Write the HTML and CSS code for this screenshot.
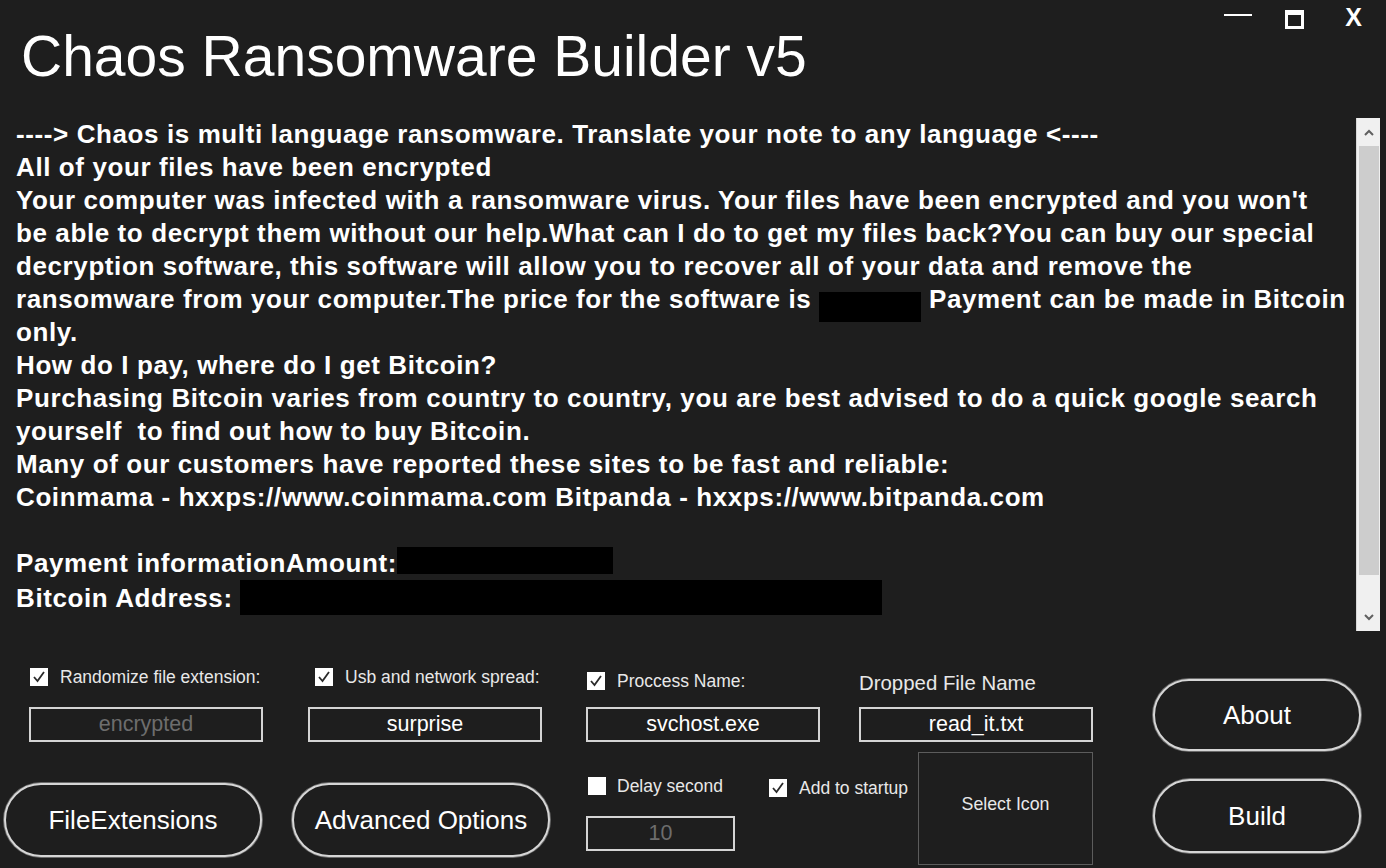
FILE: index.html
```html
<!DOCTYPE html>
<html lang="en">

<head>
    <meta charset="UTF-8">
    <title>Chaos Ransomware Builder v5</title>
    <link rel="stylesheet" href="styles.css">
</head>

<body>
    <div class="app">
        <!-- 标题栏 -->
        <div class="titlebar">
            <h1 class="title">Chaos Ransomware Builder v5</h1>
            <div class="winctl">
                <span class="win-min"></span>
                <span class="win-max"></span>
                <span class="win-close">X</span>
            </div>
        </div>

        <!-- 勒索信文本框 -->
        <div class="notebox">
            <div class="note">
                <div class="line">----&gt; Chaos is multi language ransomware. Translate your note to any language &lt;----</div>
                <div class="line">All of your files have been encrypted</div>
                <div class="line">Your computer was infected with a ransomware virus. Your files have been encrypted and you won't</div>
                <div class="line">be able to decrypt them without our help.What can I do to get my files back?You can buy our special</div>
                <div class="line">decryption software, this software will allow you to recover all of your data and remove the</div>
                <div class="line">ransomware from your computer.The price for the software is <span class="redact r-price"></span> Payment can be made in Bitcoin</div>
                <div class="line">only.</div>
                <div class="line">How do I pay, where do I get Bitcoin?</div>
                <div class="line">Purchasing Bitcoin varies from country to country, you are best advised to do a quick google search</div>
                <div class="line">yourself  to find out how to buy Bitcoin.</div>
                <div class="line">Many of our customers have reported these sites to be fast and reliable:</div>
                <div class="line">Coinmama - hxxps://www.coinmama.com Bitpanda - hxxps://www.bitpanda.com</div>
                <div class="line"> </div>
                <div class="line">Payment informationAmount:<span class="redact r-amount"></span></div>
                <div class="line">Bitcoin Address: <span class="redact r-address"></span></div>
            </div>
            <div class="scrollbar">
                <span class="sb-btn">
                    <svg width="10" height="7" viewBox="0 0 10 7"><polyline points="1,6 5,2 9,6" fill="none" stroke="#606060" stroke-width="2"/></svg>
                </span>
                <span class="sb-thumb"></span>
                <span class="sb-btn sb-down">
                    <svg width="10" height="7" viewBox="0 0 10 7"><polyline points="1,1 5,5 9,1" fill="none" stroke="#606060" stroke-width="2"/></svg>
                </span>
            </div>
        </div>

        <!-- 选项第一行 -->
        <div class="row row-a">
            <div class="group g1">
                <label class="check"><span class="box on"><svg width="18" height="18" viewBox="0 0 18 18"><polyline points="4,9 7.5,13 14,4" fill="none" stroke="#2a2a2a" stroke-width="1.8"/></svg></span>Randomize file extension:</label>
                <input class="field dim" value="encrypted" readonly>
            </div>
            <div class="group g2">
                <label class="check"><span class="box on"><svg width="18" height="18" viewBox="0 0 18 18"><polyline points="4,9 7.5,13 14,4" fill="none" stroke="#2a2a2a" stroke-width="1.8"/></svg></span>Usb and network spread:</label>
                <input class="field" value="surprise" readonly>
            </div>
            <div class="group g3">
                <label class="check"><span class="box on"><svg width="18" height="18" viewBox="0 0 18 18"><polyline points="4,9 7.5,13 14,4" fill="none" stroke="#2a2a2a" stroke-width="1.8"/></svg></span>Proccess Name:</label>
                <input class="field" value="svchost.exe" readonly>
            </div>
            <div class="group g4">
                <span class="caption">Dropped File Name</span>
                <input class="field" value="read_it.txt" readonly>
            </div>
            <button class="pill btn-about">About</button>
        </div>

        <!-- 选项第二行 -->
        <div class="row row-b">
            <button class="pill btn-ext">FileExtensions</button>
            <button class="pill btn-adv">Advanced Options</button>
            <div class="group g-delay">
                <label class="check"><span class="box"></span>Delay second</label>
                <input class="field dim short" value="10" readonly>
            </div>
            <div class="group g-startup">
                <label class="check"><span class="box on"><svg width="18" height="18" viewBox="0 0 18 18"><polyline points="4,9 7.5,13 14,4" fill="none" stroke="#2a2a2a" stroke-width="1.8"/></svg></span>Add to startup</label>
            </div>
            <div class="iconbox">Select Icon</div>
            <button class="pill btn-build">Build</button>
        </div>
    </div>
</body>
</html>
```

FILE: styles.css
```css
* {
    padding: 0;
    margin: 0;
    box-sizing: border-box;
}

body {
    background: #1e1e1e;
    color: #fff;
    font-family: "Liberation Sans", Arial, sans-serif;
    overflow: hidden;
}

.app {
    width: 1386px;
    height: 868px;
    display: flex;
    flex-direction: column;
}

/* 标题栏 */
.titlebar {
    display: flex;
    justify-content: space-between;
    align-items: flex-start;
}

.title {
    font-size: 57px;
    font-weight: normal;
    line-height: 57px;
    margin: 28px 0 0 21px;
    white-space: nowrap;
}

.winctl {
    display: flex;
    align-items: flex-start;
    padding-right: 24px;
}

.win-min {
    width: 28px;
    height: 2px;
    background: #fff;
    margin-top: 14px;
}

.win-max {
    width: 19px;
    height: 19px;
    border: 3px solid #fff;
    border-top-width: 5px;
    margin: 10px 0 0 33px;
}

.win-close {
    font-size: 25px;
    font-weight: bold;
    line-height: 25px;
    margin: 5px 0 0 41px;
}

/* 文本框 */
.notebox {
    display: flex;
    margin-top: 33px;
    height: 513px;
    padding-right: 6px;
}

.note {
    flex: 1;
    padding-left: 16px;
    font-size: 26px;
    font-weight: bold;
    letter-spacing: 0.6px;
    line-height: 33px;
    overflow: hidden;
}

.line {
    height: 33px;
    white-space: pre;
}

.redact {
    display: inline-block;
    background: #000;
    letter-spacing: 0;
}

.r-price {
    width: 102px;
    height: 30px;
    vertical-align: -14px;
}

.r-amount {
    width: 216px;
    height: 27px;
    vertical-align: -2px;
}

.r-address {
    width: 642px;
    height: 35px;
    vertical-align: -8px;
}

.scrollbar {
    width: 24px;
    background: #f0f0f0;
    border-left: 1px solid #d8d8d8;
    display: flex;
    flex-direction: column;
    align-items: center;
}

.sb-btn {
    height: 28px;
    display: flex;
    align-items: center;
    justify-content: center;
}

.sb-down {
    height: 56px;
    align-items: flex-end;
    padding-bottom: 10px;
}

.sb-thumb {
    flex: 1;
    width: 20px;
    background: #cdcdcd;
}

/* 选项区 */
.row {
    display: flex;
    align-items: flex-start;
}

.row-a {
    height: 121px;
    padding-left: 29px;
}

.row-b {
    height: 116px;
    padding-left: 4px;
}

.group {
    display: flex;
    flex-direction: column;
}

.row-a .group {
    width: 234px;
    height: 111px;
    justify-content: flex-end;
}

.check {
    display: flex;
    align-items: center;
    height: 18px;
    font-size: 17.5px;
    color: #e8e8e8;
    white-space: nowrap;
}

.box {
    width: 18px;
    height: 18px;
    background: #fff;
    margin-right: 12px;
    display: flex;
}

.g1 .check {
    margin: 0 0 21px 1px;
}

.g2 {
    margin-left: 45px;
}

.g2 .check {
    margin: 0 0 21px 7px;
}

.g3 {
    margin-left: 44px;
}

.g3 .check {
    margin: 0 0 17px 1px;
}

.g4 {
    margin-left: 39px;
}

.caption {
    font-size: 20.4px;
    line-height: 24px;
    color: #e8e8e8;
    margin-bottom: 12px;
    white-space: nowrap;
}

.field {
    width: 234px;
    height: 35px;
    background: #1e1e1e;
    border: 2px solid #d4d4d4;
    color: #fff;
    font-family: "Liberation Sans", Arial, sans-serif;
    font-size: 21.5px;
    text-align: center;
    outline: none;
}

.field.dim {
    color: #6d6d6d;
}

.field.short {
    width: 149px;
}

/* 圆角按钮 */
.pill {
    width: 208px;
    height: 72px;
    border: 2px solid #d6d6d6;
    border-radius: 37px;
    box-shadow: 0 0 0 1px #6a6a6a;
    background: #1e1e1e;
    color: #fff;
    font-family: "Liberation Sans", Arial, sans-serif;
    font-size: 26px;
}

.btn-about {
    margin: 48px 0 0 60px;
}

.btn-ext {
    width: 258px;
    height: 74px;
    margin-top: 31px;
}

.btn-adv {
    width: 258px;
    height: 74px;
    margin: 31px 0 0 30px;
}

.g-delay {
    margin: 25px 0 0 36px;
    width: 149px;
}

.g-delay .check {
    margin: 0 0 21px 2px;
}

.g-delay .check .box {
    margin-right: 11px;
}

.g-startup {
    width: 149px;
    margin: 27px 0 0 34px;
}

.iconbox {
    width: 175px;
    height: 113px;
    border: 1px solid #5c5c5c;
    display: flex;
    align-items: center;
    justify-content: center;
    padding-bottom: 8px;
    font-size: 17.8px;
    color: #e8e8e8;
}

.btn-build {
    height: 74px;
    margin: 27px 0 0 60px;
}
```
